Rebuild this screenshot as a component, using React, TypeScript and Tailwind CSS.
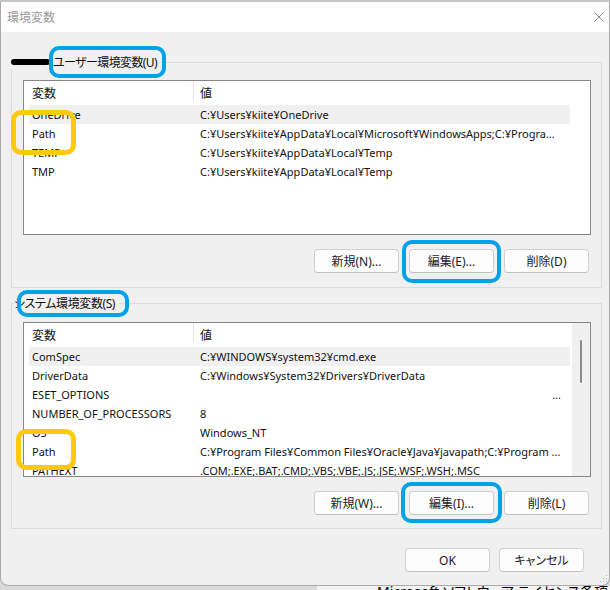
const userVars = [
  { name: "OneDrive", value: "C:¥Users¥kiite¥OneDrive", hover: true },
  { name: "Path", value: "C:¥Users¥kiite¥AppData¥Local¥Microsoft¥WindowsApps;C:¥Progra..." },
  { name: "TEMP", value: "C:¥Users¥kiite¥AppData¥Local¥Temp" },
  { name: "TMP", value: "C:¥Users¥kiite¥AppData¥Local¥Temp" },
];

const systemVars = [
  { name: "ComSpec", value: "C:¥WINDOWS¥system32¥cmd.exe", hover: true },
  { name: "DriverData", value: "C:¥Windows¥System32¥Drivers¥DriverData" },
  { name: "ESET_OPTIONS", value: "...", right: true },
  { name: "NUMBER_OF_PROCESSORS", value: "8" },
  { name: "OS", value: "Windows_NT" },
  { name: "Path", value: "C:¥Program Files¥Common Files¥Oracle¥Java¥javapath;C:¥Program ..." },
  { name: "PATHEXT", value: ".COM;.EXE;.BAT;.CMD;.VBS;.VBE;.JS;.JSE;.WSF;.WSH;.MSC" },
];

type Row = { name: string; value: string; hover?: boolean; right?: boolean };

function Button({ label }: { label: string }) {
  return (
    <button className="w-[85px] h-[24px] rounded-[4px] border border-[#d0d0d0] border-b-[#c2c2c2] bg-[#fdfdfd] text-[12px] text-[#1b1b1b] flex items-center justify-center">
      {label}
    </button>
  );
}

function VarList({ rows, scroll }: { rows: Row[]; scroll?: boolean }) {
  return (
    <div className="h-[155px] border border-[#868686] bg-white flex overflow-hidden">
      <div className="w-[546px] flex flex-col">
        {/* header */}
        <div className="h-[24px] shrink-0 flex">
          <div className="w-[169px] h-full flex items-center pl-[8px]">変数</div>
          <div className="w-px h-[19px] bg-[#e3e3e3]" />
          <div className="flex-1 h-full flex items-center pl-[6px]">値</div>
        </div>
        {rows.map((r) => (
          <div
            key={r.name}
            className={`ml-[5px] h-[19px] shrink-0 flex items-center text-[11px] ${r.hover ? "bg-[#f0f0f0]" : ""}`}
          >
            <div className="w-[164px] pl-[3px] whitespace-nowrap">{r.name}</div>
            <div
              className={`flex-1 pl-[7px] whitespace-nowrap overflow-hidden ${r.right ? "text-right pr-[9px]" : ""}`}
            >
              {r.value}
            </div>
          </div>
        ))}
      </div>
      {scroll && (
        <div className="ml-auto w-[18px] h-full bg-[#f0f0f0] flex justify-center pt-[17px]">
          <div className="w-[2px] h-[43px] rounded-full bg-[#8a8a8a]" />
        </div>
      )}
    </div>
  );
}

export default function App() {
  return (
    <div
      className="relative w-[610px] h-[590px] overflow-hidden bg-[#dadada] flex flex-col text-[12px] leading-[19px] text-[#111] [font-feature-settings:'palt']"
      style={{ fontFamily: '"Noto Sans", "Noto Sans CJK JP", sans-serif' }}
    >
      {/* strip of the window behind */}
      <div className="h-[2px] shrink-0 bg-[#c6c6c6]" />

      {/* dialog window */}
      <div className="relative h-[584px] shrink-0 bg-[#f0f0f0] border-x border-b border-[#a9a9a9] rounded-b-[8px] flex flex-col">
        {/* title bar */}
        <div className="h-[30px] shrink-0 bg-white flex items-center justify-between pl-[6px] pr-[5px]">
          <span className="text-[#9b9b9b]">環境変数</span>
          <svg width="10" height="10" viewBox="0 0 10 10" className="text-[#8a8a8a]">
            <path d="M0.5 0.5L9.5 9.5M9.5 0.5L0.5 9.5" stroke="currentColor" strokeWidth="1" />
          </svg>
        </div>

        <div className="flex flex-col pl-[10px] pr-[7px]">
          {/* user variables */}
          <div className="relative mt-[30px] h-[226px] border border-[#dcdcdc] pt-[17px] pl-[11px] pr-[10px] flex flex-col">
            <div className="absolute -left-px -top-[9px] h-[16px] flex items-center bg-[#f0f0f0] pr-[4px]">
              <div className="w-[39px] h-[6px] rounded-full bg-black" />
              <span className="ml-[3px] tracking-[-0.6px]">ユーザー環境変数(U)</span>
            </div>
            <VarList rows={userVars} />
            <div className="mt-[14px] flex justify-end gap-[10px] pr-[2px]">
              <Button label="新規(N)..." />
              <Button label="編集(E)..." />
              <Button label="削除(D)" />
            </div>
          </div>

          {/* system variables */}
          <div className="relative mt-[15px] h-[226px] border border-[#dcdcdc] pt-[18px] pl-[11px] pr-[10px] flex flex-col">
            <div className="absolute left-[2px] -top-[9px] h-[16px] flex items-center bg-[#f0f0f0] pr-[4px]">
              <span className="tracking-[-0.4px]">システム環境変数(S)</span>
            </div>
            <VarList rows={systemVars} scroll />
            <div className="mt-[14px] flex justify-end gap-[10px] pr-[2px]">
              <Button label="新規(W)..." />
              <Button label="編集(I)..." />
              <Button label="削除(L)" />
            </div>
          </div>

          <div className="mt-[19px] flex justify-end gap-[9px] pr-[18px]">
            <Button label="OK" />
            <Button label="キャンセル" />
          </div>
        </div>

        {/* resize grip */}
        <svg width="8" height="8" viewBox="0 0 8 8" className="absolute right-[1px] bottom-[2px] text-[#b5b5b5]">
          <rect x="6" y="0" width="1" height="1" fill="currentColor" />
          <rect x="3" y="3" width="1" height="1" fill="currentColor" />
          <rect x="6" y="3" width="1" height="1" fill="currentColor" />
          <rect x="0" y="6" width="1" height="1" fill="currentColor" />
          <rect x="3" y="6" width="1" height="1" fill="currentColor" />
          <rect x="6" y="6" width="1" height="1" fill="currentColor" />
        </svg>
      </div>

      {/* window behind, bottom edge */}
      <div className="flex-1 flex">
        <div className="w-[317px] bg-[#dadada]" />
        <div className="flex-1 bg-[#f3f3f3] pl-[60px] text-[14px] leading-[12px] text-black whitespace-nowrap">
          Microsoft ソフトウェア ライセンス条項
        </div>
      </div>

      {/* paint annotations */}
      <div className="absolute left-[49px] top-[46px] w-[117px] h-[32px] border-4 border-[#00a2e8] rounded-[10px]" />
      <div className="absolute left-[17px] top-[290px] w-[112px] h-[27px] border-4 border-[#00a2e8] rounded-[10px]" />
      <div className="absolute left-[402px] top-[240px] w-[99px] h-[43px] border-4 border-[#00a2e8] rounded-[10px]" />
      <div className="absolute left-[401px] top-[482px] w-[101px] h-[41px] border-4 border-[#00a2e8] rounded-[10px]" />
      <div className="absolute left-[11px] top-[110px] w-[65px] h-[45px] border-[5px] border-[#ffc90e] rounded-[10px]" />
      <div className="absolute left-[16px] top-[429px] w-[60px] h-[41px] border-[5px] border-[#ffc90e] rounded-[10px]" />
    </div>
  );
}
